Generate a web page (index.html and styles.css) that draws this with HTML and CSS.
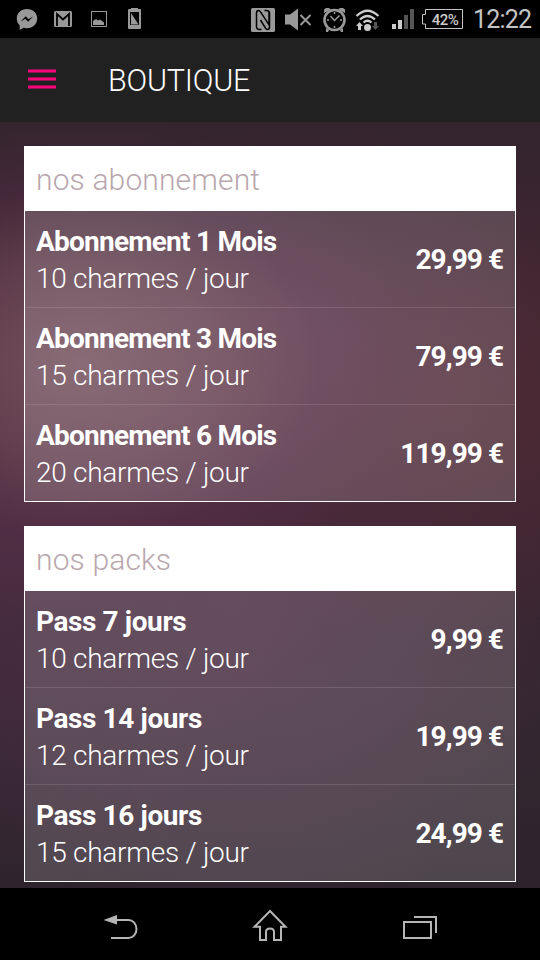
FILE: index.html
```html
<!DOCTYPE html>
<html lang="fr">
<head>
<meta charset="utf-8">
<title>Boutique</title>
<link rel="stylesheet" href="styles.css">
</head>
<body>
<div class="status">
  <svg class="status-left" width="160" height="38" viewBox="0 0 160 38" fill="#999">
    <path d="M27 9C21 9 16.800 13 16.800 18.500c0 3 1.200 5.300 2.900 7v4.500l4-2.200c1 .3 2.200.4 3.300.4 6 0 10.200-4.300 10.200-9.700S33 9 27 9z"/>
    <path d="M20.500 21.800l5.200-5.600 2.800 3 4.800-3-5.200 5.600-2.800-3z" fill="#000"/>
    <rect x="54" y="11" width="18" height="16" rx="1.500"/>
    <path d="M57 26V14l6 5.500 6-5.500v12" fill="none" stroke="#000" stroke-width="1.800"/>
    <rect x="91.500" y="11.500" width="15" height="15" fill="none" stroke="#999"/>
    <path d="M93 25v-4l3-2 2 1.500 2-1 4 3V25z"/>
    <path d="M129 9h2V8h7v1h2a1 1 0 0 1 1 1v18a1 1 0 0 1-1 1h-11a1 1 0 0 1-1-1V10a1 1 0 0 1 1-1z"/>
    <path d="M130 12h9v13h-9z" fill="#000"/>
    <path d="M131 13l7.500 11.500H131z"/>
  </svg>
  <svg class="status-right" width="180" height="38" viewBox="244 0 180 38" fill="#999">
    <rect x="251" y="8" width="24" height="24" rx="1.500"/>
    <path d="M261.500 29.500h-2q-3 0-3-3V13q0-2.500 2-2.500 1.200 0 2 1.300l8.500 13V11M264.500 10.500h2q3 0 3 3V27q0 2.500-2 2.500-1.200 0-2-1.300l-5-8.200" fill="none" stroke="#000" stroke-width="1.500"/>
    <path d="M285 14.500h5l8-6v22l-8-6h-5z"/>
    <path d="M300.500 15l10 10M310.500 15l-10 10" stroke="#999" stroke-width="2"/>
    <circle cx="334.500" cy="20" r="10" fill="none" stroke="#999" stroke-width="2.600"/>
    <path d="M324 13V9.500L326 8h3l2 1.500zM345 13V9.500L343 8h-3l-2 1.500zM326 28l3 2-1 2h-2zM343 28l-3 2 1 2h2z"/>
    <path d="M330.500 16l4 4.500 5-5M334.500 12v2M334.500 26v2M327 20h2M340 20h2" fill="none" stroke="#999" stroke-width="1.500"/>
    <path d="M356.500 16q11-10.500 22 0M360 19.500q7.500-7 15 0M363.500 22.500q4-3.500 8 0" fill="none" stroke="#ccc" stroke-width="2.200"/>
    <circle cx="367.500" cy="27.500" r="3.500" fill="#ccc"/>
    <path d="M359.500 22l3.500 4h-2v4h-3v-4h-2z" fill="#ccc"/>
    <path d="M375.500 30l3.500-4h-2v-4h-3v4h-2z" fill="#555"/>
    <path d="M392 24h4v5h-4zM398 20h4v9h-4z" fill="#ccc"/>
    <path d="M404 15h4v14h-4zM410 9h4v20h-4z" fill="#555"/>
  </svg>
  <div class="battery">
    <svg width="42" height="21" viewBox="0 0 42 21" fill="none" stroke="#c4c4c4"><path d="M3.500.500h37v19h-37V15H.500V5.500h3z"/></svg>
    <span>42%</span>
  </div>
  <span class="clock">12:22</span>
</div>
<header class="bar">
  <svg class="menu" width="28" height="22" viewBox="0 0 28 22"><path fill="#98104f" d="M0 1h28v4H0zM0 9h28v4H0zM0 17h28v4H0z"/><path fill="#f5077d" d="M0 2h28v2H0zM0 10h28v2H0zM0 18h28v2H0z"/></svg>
  <h1>BOUTIQUE</h1>
</header>
<main>
  <section class="card">
    <h2>nos abonnement</h2>
    <div class="row"><div><b>Abonnement 1 Mois</b><p>10 charmes / jour</p></div><strong>29,99 €</strong></div>
    <div class="row"><div><b>Abonnement 3 Mois</b><p>15 charmes / jour</p></div><strong>79,99 €</strong></div>
    <div class="row"><div><b>Abonnement 6 Mois</b><p>20 charmes / jour</p></div><strong>119,99 €</strong></div>
  </section>
  <section class="card packs">
    <h2>nos packs</h2>
    <div class="row"><div><b>Pass 7 jours</b><p>10 charmes / jour</p></div><strong>9,99 €</strong></div>
    <div class="row"><div><b>Pass 14 jours</b><p>12 charmes / jour</p></div><strong>19,99 €</strong></div>
    <div class="row"><div><b>Pass 16 jours</b><p>15 charmes / jour</p></div><strong>24,99 €</strong></div>
  </section>
</main>
<nav class="nav">
  <svg width="36" height="32" viewBox="0 0 36 32"><path d="M10 10h16.500a8 9 0 0 1 0 18H9" fill="none" stroke="#b5b5b5" stroke-width="2"/><path d="M1.500 10l13.500-5v9.500z" fill="#b5b5b5"/></svg>
  <svg width="36" height="36" viewBox="0 0 36 36" fill="none" stroke="#b5b5b5" stroke-width="2"><path d="M18 3L2.500 18.800H8V32h6v-8q0-3.500 4-3.500t4 3.500v8h7V18.800h4.500z"/></svg>
  <svg width="36" height="32" viewBox="0 0 36 32" fill="none" stroke="#b5b5b5" stroke-width="2"><path d="M2 12h27v16H2zM12 7h22v16"/></svg>
</nav>
</body>
</html>
```
FILE: styles.css
```css
* { box-sizing: border-box; }
body {
  margin: 0;
  width: 540px;
  height: 960px;
  overflow: hidden;
  background: #000;
  color: #fff;
  font-family: Roboto, sans-serif;
}
h1, h2, p { margin: 0; font-weight: 300; }
.status {
  height: 38px;
  display: flex;
  align-items: center;
  background: #000;
}
.status-left { margin-right: 84px; }
.status-right { margin-right: -2px; }
svg { display: block; flex: none; }
.battery { display: grid; width: 42px; margin-top: 1px; }
.battery svg, .battery span { grid-area: 1 / 1; }
.battery span {
  padding-left: 4px;
  text-align: center;
  font-size: 15px;
  line-height: 22px;
  font-weight: 500;
  letter-spacing: -.5px;
  color: #ccc;
}
.clock { margin: 2px 0 0 9px; font-size: 25px; line-height: 36px; letter-spacing: -.8px; color: #c4c4c4; }
.bar {
  height: 84px;
  display: flex;
  align-items: center;
  padding-left: 28px;
  background: #212121;
}
.menu { margin-top: -2px; }
h1 { margin: 2px 0 0 52px; font-size: 30.500px; line-height: 40px; letter-spacing: -.2px; }
main {
  height: 766px;
  padding: 24px;
  display: flex;
  flex-direction: column;
  gap: 24px;
  background:
    radial-gradient(ellipse 340px 250px at 80px 240px, rgba(120, 84, 96, .9) 0%, rgba(114, 72, 88, .68) 40%, rgba(98, 50, 80, .33) 70%, transparent 100%),
    radial-gradient(ellipse 240px 200px at 310px 200px, rgba(92, 50, 82, .4), transparent),
    radial-gradient(ellipse 300px 330px at 0 450px, rgba(80, 48, 72, .6), transparent),
    radial-gradient(ellipse 330px 250px at 440px 270px, rgba(82, 43, 54, .9), transparent),
    radial-gradient(ellipse 330px 330px at 240px 480px, rgba(74, 42, 66, .85), transparent),
    linear-gradient(#33242d, #3b2430 40%, #352731 75%, #2d232c);
}
.card {
  height: 356px;
  border: 1px solid #fff;
  background: rgba(255, 255, 255, .16);
}
.card h2 {
  height: 64px;
  padding-left: 11px;
  background: #fff;
  color: #b9a7ae;
  font-size: 30px;
  line-height: 65px;
  letter-spacing: .14px;
}
.row {
  height: 97px;
  padding: 12px 12px 10px 11px;
  display: flex;
  align-items: center;
  justify-content: space-between;
  border-bottom: 1px solid rgba(255, 255, 255, .12);
}
.row:last-child { height: 96px; border: 0; }
.row b, .row p { display: block; font-size: 28px; line-height: 37px; }
.row b { letter-spacing: -.77px; }
.packs .row b { letter-spacing: -.4px; }
.row p { letter-spacing: -.27px; }
.row strong {
  margin-top: -2px;
  font-size: 28px;
  line-height: 37px;
  letter-spacing: -.95px;
}
.nav {
  height: 72px;
  display: flex;
  justify-content: center;
  align-items: center;
  gap: 114px;
  padding-top: 3px;
  background: #000;
}
```
